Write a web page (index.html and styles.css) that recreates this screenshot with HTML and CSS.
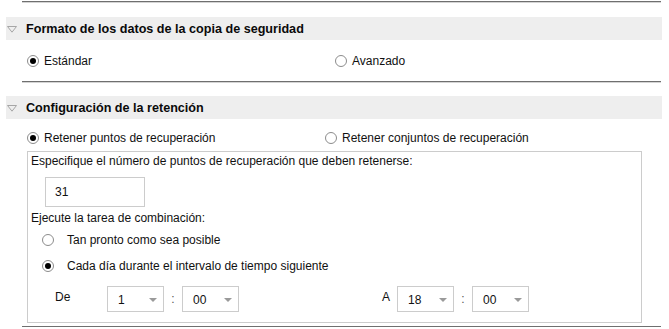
FILE: index.html
```html
<!DOCTYPE html>
<html lang="es">
<head>
<meta charset="utf-8">
<title>Configuración</title>
<link rel="stylesheet" href="styles.css">
</head>
<body>
<div class="page">
  <div class="rule rule-top"></div>

  <div class="group-head head-format">
    <svg class="caret" width="10" height="7" viewBox="0 0 10 7"><polygon points="0.5,0.5 9.5,0.5 5,6.2" fill="none" stroke="#a6a6a6" stroke-width="1"/></svg>
    <span class="head-title">Formato de los datos de la copia de seguridad</span>
  </div>
  <div class="option-row row-format">
    <label class="opt opt-format-first"><span class="radio checked"></span>Estándar</label>
    <label class="opt"><span class="radio"></span>Avanzado</label>
  </div>

  <div class="rule"></div>

  <div class="group-head head-retain">
    <svg class="caret" width="10" height="7" viewBox="0 0 10 7"><polygon points="0.5,0.5 9.5,0.5 5,6.2" fill="none" stroke="#a6a6a6" stroke-width="1"/></svg>
    <span class="head-title">Configuración de la retención</span>
  </div>
  <div class="option-row row-retain">
    <label class="opt opt-retain-first"><span class="radio checked"></span>Retener puntos de recuperación</label>
    <label class="opt opt-wide"><span class="radio"></span>Retener conjuntos de recuperación</label>
  </div>

  <div class="retain-box">
    <div class="line hint">Especifique el número de puntos de recuperación que deben retenerse:</div>
    <div class="num-input">31</div>
    <div class="line merge-label">Ejecute la tarea de combinación:</div>
    <label class="sub-opt"><span class="radio"></span>Tan pronto como sea posible</label>
    <label class="sub-opt"><span class="radio checked"></span>Cada día durante el intervalo de tiempo siguiente</label>
    <div class="time-row">
      <span class="time-label from-label">De</span>
      <div class="select"><span class="sel-val">1</span><span class="sel-arrow"></span></div>
      <span class="colon">:</span>
      <div class="select"><span class="sel-val">00</span><span class="sel-arrow"></span></div>
      <span class="time-label to-label">A</span>
      <div class="select"><span class="sel-val">18</span><span class="sel-arrow"></span></div>
      <span class="colon">:</span>
      <div class="select"><span class="sel-val">00</span><span class="sel-arrow"></span></div>
    </div>
  </div>

  <div class="rule rule-bottom"></div>
</div>
</body>
</html>
```

FILE: styles.css
```css
html, body {
  margin: 0;
  padding: 0;
  background: #ffffff;
}
body {
  font-family: "Liberation Sans", Arial, sans-serif;
  font-size: 12px;
  color: #111111;
}
.page {
  padding-top: 1px;
}
.rule {
  margin-left: 22px;
  width: 639px;
  height: 1px;
  background: #6f6f6f;
  box-shadow: 0 1px 0 #d4d4d4;
}
.group-head {
  margin-left: 6px;
  width: 656px;
  height: 23px;
  box-sizing: border-box;
  padding-left: 1px;
  background: #eeeeee;
  display: flex;
  align-items: center;
}
.head-format {
  margin-top: 15px;
}
.head-retain {
  margin-top: 14px;
}
.caret {
  display: block;
  flex: none;
  margin-right: 9px;
  margin-top: 1px;
}
.head-title {
  font-weight: bold;
  font-size: 12.6px;
  color: #0a0a0a;
}
.option-row {
  display: flex;
  align-items: center;
  padding-left: 27px;
  box-sizing: border-box;
}
.row-format {
  height: 41px;
}
.row-retain {
  height: 32px;
  padding-top: 5px;
}
.opt {
  display: flex;
  align-items: center;
}
.opt-format-first {
  width: 308px;
}
.opt-retain-first {
  width: 298px;
}
.radio {
  flex: none;
  width: 12px;
  height: 12px;
  box-sizing: border-box;
  border: 1px solid #8c8c8c;
  border-radius: 50%;
  background: #ffffff;
  margin-right: 5px;
  position: relative;
}
.radio.checked::after {
  content: "";
  position: absolute;
  left: 2px;
  top: 2px;
  width: 6px;
  height: 6px;
  border-radius: 50%;
  background: #000000;
}
.retain-box {
  margin-left: 27px;
  width: 615px;
  box-sizing: border-box;
  border: 1px solid #cccccc;
  padding: 0 0 10px 3px;
}
.line {
  line-height: 18px;
}
.num-input {
  margin: 7px 0 0 14px;
  width: 100px;
  height: 30px;
  box-sizing: border-box;
  border: 1px solid #cccccc;
  padding-left: 9px;
  line-height: 28px;
}
.merge-label {
  margin-top: 2px;
}
.sub-opt {
  display: flex;
  align-items: center;
  height: 26px;
  padding-left: 11px;
}
.sub-opt .radio {
  margin-right: 13px;
}
.time-row {
  display: flex;
  align-items: center;
  margin-top: 7px;
  height: 26px;
}
.time-label {
  line-height: 20px;
  align-self: flex-start;
  padding-top: 1px;
}
.from-label {
  margin-left: 24px;
  width: 52px;
}
.to-label {
  margin-left: 143px;
  width: 15px;
}
.select {
  width: 57px;
  height: 26px;
  box-sizing: border-box;
  border: 1px solid #cccccc;
  display: flex;
  align-items: center;
  justify-content: space-between;
  padding: 2px 6px 0 10px;
}
.sel-arrow {
  width: 0;
  height: 0;
  border-left: 4px solid transparent;
  border-right: 4px solid transparent;
  border-top: 4px solid #9a9a9a;
}
.colon {
  width: 18px;
  text-align: center;
  color: #555555;
}
.rule-bottom {
  margin-top: 3px;
}
```
